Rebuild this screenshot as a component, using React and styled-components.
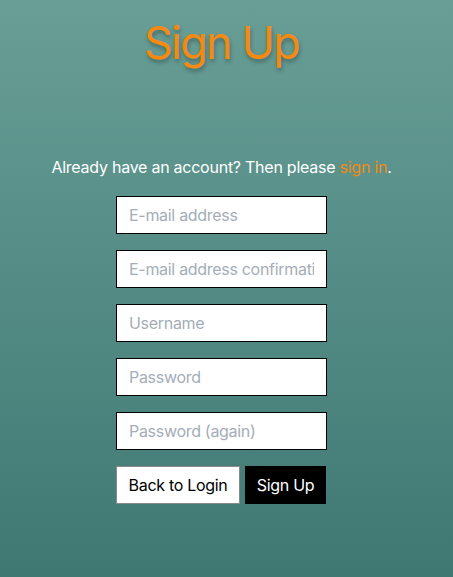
import React from 'react';
import styled, { createGlobalStyle } from 'styled-components';

const GlobalStyle = createGlobalStyle`
  html, body {
    margin: 0;
    padding: 0;
  }
  body {
    min-height: 577px;
    background: linear-gradient(180deg, #689e96 0%, #3f7873 100%);
    font-family: Inter, "Noto Sans", sans-serif;
  }
`;

const Page = styled.div`
  display: flex;
  flex-direction: column;
  align-items: center;
  width: 443px;
  min-height: 577px;
`;

const Title = styled.h1`
  margin: 14px 0 0;
  font-size: 45px;
  font-weight: 400;
  letter-spacing: -1.8px;
  line-height: 58px;
  color: #f28a14;
  text-shadow: 1px 3px 4px rgba(0, 0, 0, 0.3);
`;

const Note = styled.p`
  margin: 84px 0 0;
  font-size: 16px;
  line-height: 22px;
  color: #ffffff;
  letter-spacing: -0.25px;
`;

const Link = styled.a`
  color: #f28a14;
  text-decoration: none;
`;

const Form = styled.form`
  display: flex;
  flex-direction: column;
  gap: 16px;
  width: 211px;
  margin-top: 18px;
`;

const Field = styled.input`
  box-sizing: border-box;
  width: 100%;
  height: 38px;
  padding: 0 12px;
  border: 1px solid #000;
  border-radius: 0;
  background: #fff;
  font-family: inherit;
  font-size: 16px;
  letter-spacing: -0.3px;
  outline: none;

  &::placeholder {
    color: #a4adb8;
  }
`;

const Actions = styled.div`
  display: flex;
  gap: 5px;
`;

const Button = styled.button`
  box-sizing: border-box;
  height: 38px;
  padding: 0;
  white-space: nowrap;
  font-family: inherit;
  font-size: 16px;
  letter-spacing: -0.3px;
  border-radius: 0;
  cursor: pointer;
  background: ${p => (p.$primary ? '#000' : '#fff')};
  color: ${p => (p.$primary ? '#fff' : '#000')};
  border: 1px solid ${p => (p.$primary ? '#000' : '#8a8a8a')};
  width: ${p => (p.$primary ? '81px' : '124px')};
`;

export default function App() {
  return (
    <>
      <GlobalStyle />
      <Page>
        <Title>Sign Up</Title>
        <Note>
          Already have an account? Then please <Link href="#">sign in</Link>.
        </Note>
        <Form onSubmit={e => e.preventDefault()}>
          <Field type="email" placeholder="E-mail address" />
          <Field type="email" placeholder="E-mail address confirmation" />
          <Field type="text" placeholder="Username" />
          <Field type="password" placeholder="Password" />
          <Field type="password" placeholder="Password (again)" />
          <Actions>
            <Button type="button">Back to Login</Button>
            <Button type="submit" $primary>Sign Up</Button>
          </Actions>
        </Form>
      </Page>
    </>
  );
}
